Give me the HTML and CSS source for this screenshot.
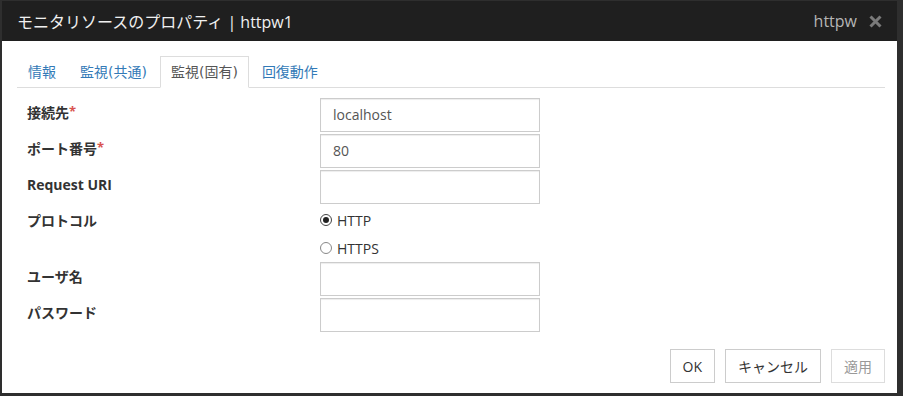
FILE: index.html
```html
<!DOCTYPE html>
<html>
  <head>
    <meta charset="utf-8">
    <title>モニタリソースのプロパティ</title>
    <link rel="stylesheet" href="styles.css">
  </head>
  <body>
    <div class="dialog">
      <div class="dialog-header">
        <span class="title">モニタリソースのプロパティ | httpw1</span>
        <span class="header-right">
          <span class="obj-name">httpw</span>
          <svg class="close" width="13" height="13" viewBox="0 0 13 13">
            <path d="M1.5 1.5 L11.5 11.5 M11.5 1.5 L1.5 11.5" stroke="#7a7a7a" stroke-width="3" />
          </svg>
        </span>
      </div>

      <div class="dialog-body">
        <ul class="tabs">
          <li><a>情報</a></li>
          <li><a>監視(共通)</a></li>
          <li class="active"><a>監視(固有)</a></li>
          <li><a>回復動作</a></li>
        </ul>

        <div class="form">
          <div class="row">
            <label>接続先<span class="req">*</span></label>
            <div class="input">localhost</div>
          </div>
          <div class="row">
            <label>ポート番号<span class="req">*</span></label>
            <div class="input">80</div>
          </div>
          <div class="row">
            <label>Request URI</label>
            <div class="input"></div>
          </div>
          <div class="row radio-row">
            <label>プロトコル</label>
            <div class="radio checked"><span class="dot"></span>HTTP</div>
          </div>
          <div class="row radio-row">
            <label></label>
            <div class="radio"><span class="dot"></span>HTTPS</div>
          </div>
          <div class="row">
            <label>ユーザ名</label>
            <div class="input"></div>
          </div>
          <div class="row">
            <label>パスワード</label>
            <div class="input"></div>
          </div>
        </div>
      </div>

      <div class="dialog-footer">
        <button class="btn">OK</button>
        <button class="btn">キャンセル</button>
        <button class="btn" disabled>適用</button>
      </div>
    </div>
  </body>
</html>
```

FILE: styles.css
```css
* {
  margin: 0;
  padding: 0;
  box-sizing: border-box;
}

html,
body {
  height: 100%;
}

body {
  background-color: #2e2e2e;
  font-family: "Open Sans", "Noto Sans CJK JP", sans-serif;
  font-size: 14px;
  color: #333;
  padding: 1px 6px 3px 2px;
}

.dialog {
  height: 100%;
  background-color: white;
  display: flex;
  flex-direction: column;
}

.dialog-header {
  height: 40px;
  background-color: #1f1f1f;
  display: flex;
  align-items: center;
  justify-content: space-between;
  padding: 0 15px;
}

.dialog-header .title {
  color: #f0f0f0;
  font-size: 16px;
}

.header-right {
  display: flex;
  align-items: center;
  gap: 12px;
}

.header-right .obj-name {
  color: #b5b5b5;
  font-size: 16px;
}

.dialog-body {
  flex: 1;
  padding: 15px 12px 0 15px;
}

.tabs {
  list-style: none;
  display: flex;
  border-bottom: 1px solid #ddd;
  font-family: "DejaVu Sans", "Noto Sans CJK JP", sans-serif;
}

.tabs li {
  margin-right: 2px;
  margin-bottom: -1px;
}

.tabs li a {
  display: block;
  padding: 5px 10px;
  line-height: 20px;
  border: 1px solid transparent;
  color: #337ab7;
}

.tabs li.active a {
  color: #555;
  background-color: white;
  border-color: #ddd;
  border-bottom-color: transparent;
}

.form {
  margin-top: 10px;
  padding-left: 10px;
}

.row {
  display: grid;
  grid-template-columns: 293px 220px;
  align-items: center;
  margin-bottom: 2px;
}

.row label {
  align-self: start;
  padding-top: 5px;
  line-height: 20px;
  font-weight: bold;
}

.req {
  color: #d9534f;
  font-size: 13px;
  vertical-align: top;
  position: relative;
  top: -2px;
}

.input {
  height: 34px;
  border: 1px solid #ccc;
  box-shadow: inset 0 1px 1px rgba(0, 0, 0, 0.075);
  padding: 0 12px;
  line-height: 32px;
  color: #555;
}

.radio-row {
  height: 28px;
  margin-bottom: 0;
}

.radio {
  display: flex;
  align-items: center;
  gap: 5px;
}

.radio .dot {
  width: 12px;
  height: 12px;
  border: 1px solid #888;
  border-radius: 50%;
  display: flex;
  align-items: center;
  justify-content: center;
}

.radio.checked .dot {
  border-color: #444;
}

.radio.checked .dot::after {
  content: "";
  width: 6px;
  height: 6px;
  border-radius: 50%;
  background-color: #222;
}

.dialog-footer {
  display: flex;
  justify-content: flex-end;
  gap: 10px;
  padding: 0 12px 10px 0;
}

.btn {
  height: 34px;
  padding: 0 12px;
  border: 1px solid #ccc;
  background-color: white;
  font-family: inherit;
  font-size: 14px;
  color: #333;
}

.btn:disabled {
  color: #999;
  border-color: #ddd;
}
```
